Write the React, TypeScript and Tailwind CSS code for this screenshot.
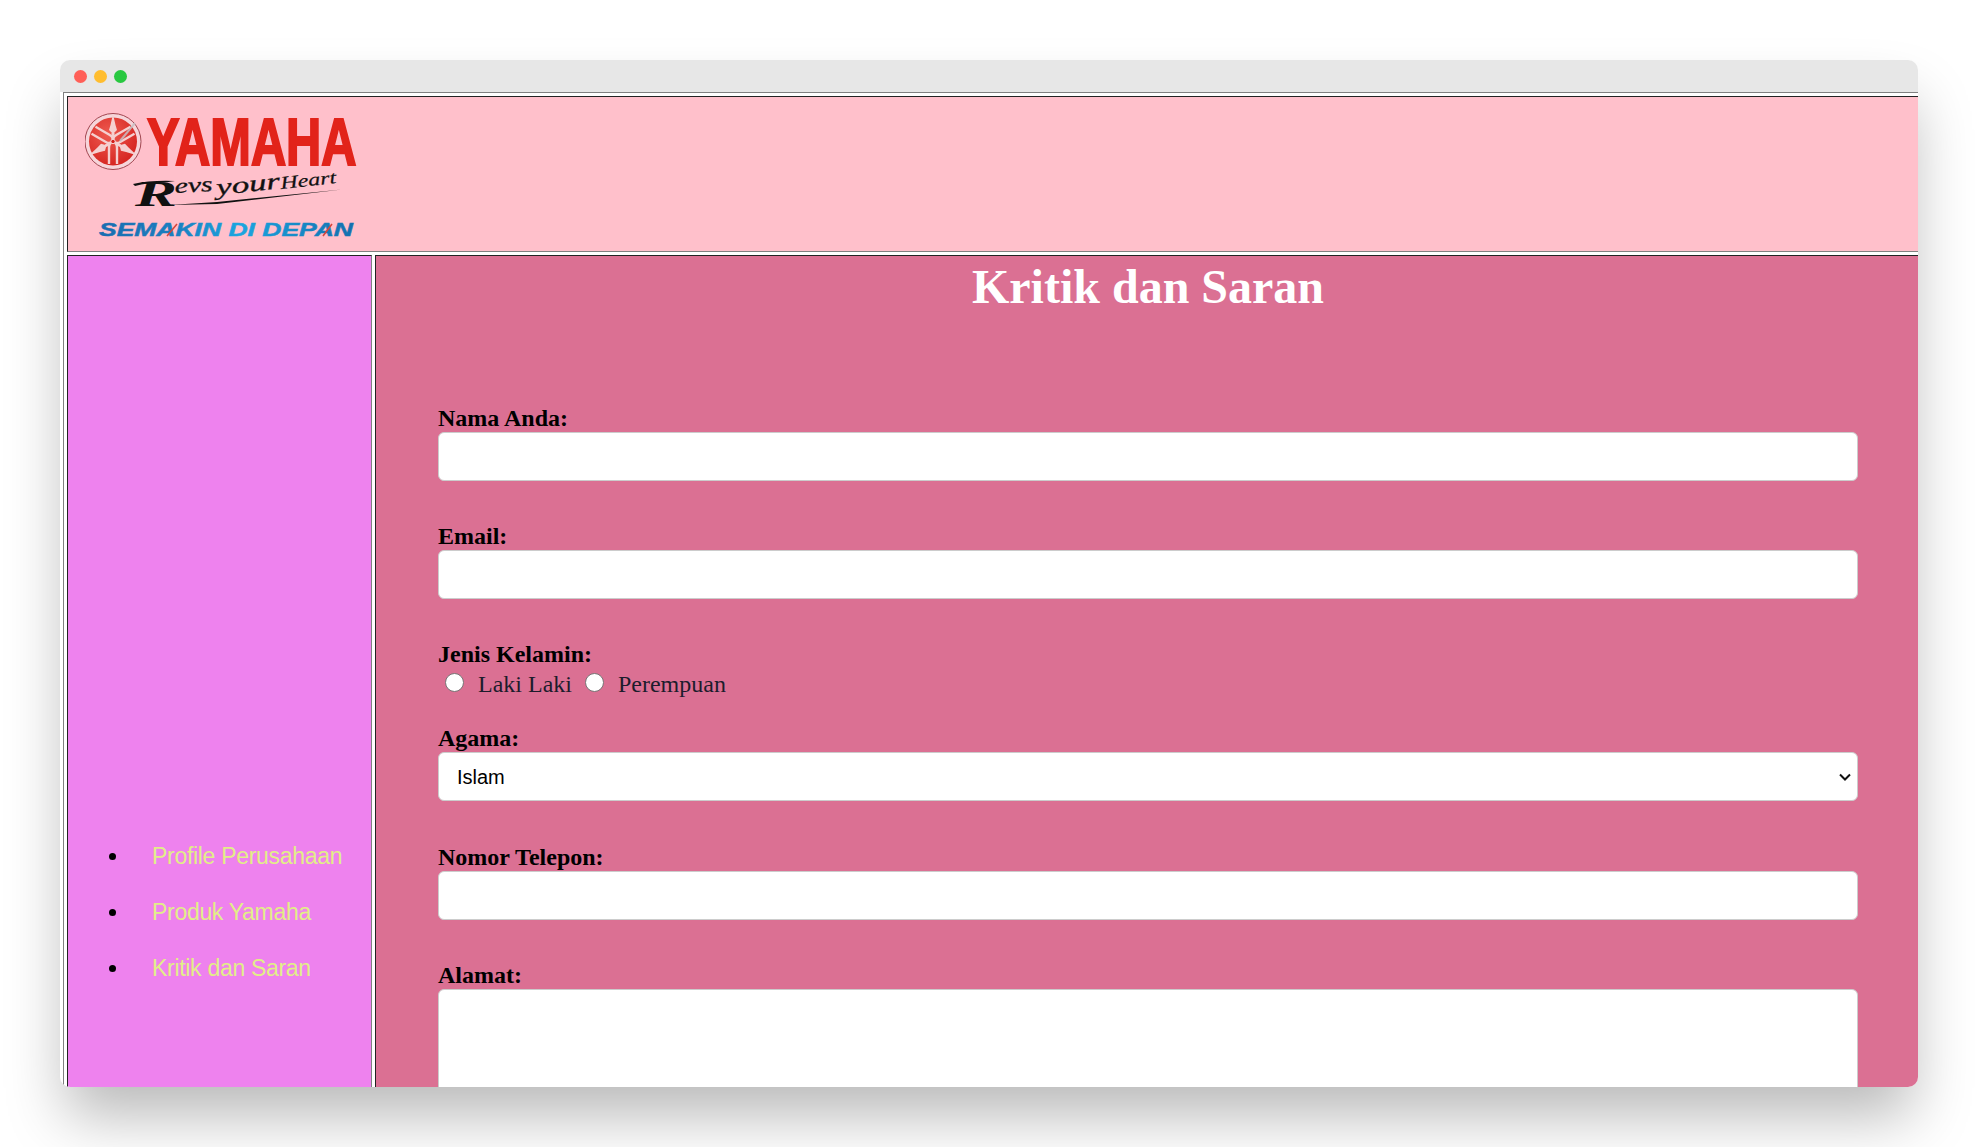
const inputClass = "block w-full h-[49px] rounded-[6px] border border-[#cccccc] bg-white";
const labelClass = "block font-bold text-[24px] leading-[27px] text-black";

function YamahaLogo() {
  const spokes = [0, 120, 240];
  return (
    <svg viewBox="0 -10 280 140" className="block w-[280px] h-[140px]">
      <defs>
        <radialGradient id="emblem" cx="40%" cy="35%" r="75%">
          <stop offset="0%" stopColor="#ee5a50" />
          <stop offset="100%" stopColor="#d3201c" />
        </radialGradient>
        <linearGradient id="semakin" x1="0" x2="1" y1="0" y2="0">
          <stop offset="0%" stopColor="#1a6db0" />
          <stop offset="30%" stopColor="#1a7fc0" />
          <stop offset="55%" stopColor="#1ba6e0" />
          <stop offset="100%" stopColor="#136fae" />
        </linearGradient>
      </defs>
      <circle cx="28" cy="30.5" r="28" fill="#f6d5da" stroke="#a14650" strokeWidth="1" />
      <circle cx="28" cy="30.5" r="24" fill="url(#emblem)" />
      {spokes.map((angle) => (
        <g key={angle} transform={`rotate(${angle} 28 30.5)`} fill="none" stroke="#f5d0d0">
          <path d="M28 3L25.5 14L24 19L28 23L32 19L30.5 14z" fill="#f5d0d0" stroke="none" />
          <path d="M28 22V30" strokeWidth="3" />
          <path d="M24 53V37Q24 31 28 31Q32 31 32 37V53" strokeWidth="2.4" />
        </g>
      ))}
      <circle cx="28" cy="30.5" r="2.2" fill="#d3201c" stroke="#f5d0d0" />
      <path d="M35 30L50 12" stroke="#c8c0c4" strokeWidth="2" opacity="0.85" />
      <text
        transform="translate(62 53.5) scale(0.9755 1.34)"
        fontFamily="'Liberation Sans', sans-serif"
        fontWeight="700"
        fontSize="50"
        fill="#e2231a"
        stroke="#e2231a"
        strokeWidth="1.6"
      >
        YAMAHA
      </text>
      <g fill="#111111">
        <text
          x="50"
          y="95"
          textLength="42"
          lengthAdjust="spacingAndGlyphs"
          fontFamily="'Liberation Serif', serif"
          fontStyle="italic"
          fontWeight="700"
          fontSize="36"
        >
          R
        </text>
        <text x="90" y="82" transform="rotate(-3 90 82)" fontFamily="'Liberation Serif', serif" fontStyle="italic" fontSize="21" stroke="#111111" strokeWidth="0.3" textLength="38" lengthAdjust="spacingAndGlyphs">
          evs
        </text>
        <text x="132" y="84" transform="rotate(-6 132 84)" fontFamily="'Liberation Serif', serif" fontStyle="italic" fontSize="23" stroke="#111111" strokeWidth="0.3" textLength="64" lengthAdjust="spacingAndGlyphs">
          your
        </text>
        <text x="196" y="78" transform="rotate(-6 196 78)" fontFamily="'Liberation Serif', serif" fontStyle="italic" fontSize="18" stroke="#111111" strokeWidth="0.2" textLength="56" lengthAdjust="spacingAndGlyphs">
          Heart
        </text>
      </g>
      <path d="M48 73Q66 69 90 70L80 71.5Q64 71 50 75zM84 94L132 91L257 78.5L132 93z" fill="#111111" />
      <text
        x="14"
        y="125"
        textLength="254"
        lengthAdjust="spacingAndGlyphs"
        fontFamily="'Liberation Sans', sans-serif"
        fontStyle="italic"
        fontWeight="700"
        fontSize="19"
        fill="url(#semakin)"
        stroke="url(#semakin)"
        strokeWidth="0.5"
      >
        SEMAKIN DI DEPAN
      </text>
      <path d="M82 125L92 113M238 125L247 113" stroke="#d8453a" strokeWidth="1.6" />
    </svg>
  );
}

function SideLink({ children }: { children: React.ReactNode }) {
  return (
    <li className="h-[56px] flex items-center">
      <span className="w-[7px] h-[7px] rounded-full bg-black ml-[41px] mr-[36px]" />
      <a href="#" className="text-[#e2ee88] text-[23px] tracking-[-0.3px]">
        {children}
      </a>
    </li>
  );
}

export default function App() {
  return (
    <div className="h-screen bg-white p-[60px] pb-0 font-['Liberation_Serif',serif]">
      <div className="w-[1858px] h-[1027px] rounded-[10px] overflow-hidden bg-white shadow-[0_35px_60px_-6px_rgba(0,0,0,0.28)]">
        <div className="h-[32px] bg-[#e7e7e7] flex items-center gap-[7px] pl-[14px] pt-[1px]">
          <span className="w-[13px] h-[13px] rounded-full bg-[#ff5f57]" />
          <span className="w-[13px] h-[13px] rounded-full bg-[#ffbd2e]" />
          <span className="w-[13px] h-[13px] rounded-full bg-[#28c840]" />
        </div>
        <div className="ml-[3px] w-[1900px] border-t border-l border-[#808080] pt-[3px] pl-[3px]">
          <header className="h-[156px] w-[1880px] border border-t-[#222222] border-l-[#222222] border-b-[#808080] border-r-[#808080] bg-[#ffc0cb] pl-[17px] pt-[4px]">
            <YamahaLogo />
          </header>
          <div className="flex gap-[3px] mt-[3px]">
            <aside className="w-[305px] h-[900px] border border-t-[#222222] border-l-[#222222] border-b-[#808080] border-r-[#808080] bg-[#ee82ee] font-['Liberation_Sans',sans-serif]">
              <ul className="pt-[572px]">
                <SideLink>Profile Perusahaan</SideLink>
                <SideLink>Produk Yamaha</SideLink>
                <SideLink>Kritik dan Saran</SideLink>
              </ul>
            </aside>
            <main className="w-[1545px] h-[900px] border border-t-[#222222] border-l-[#222222] border-b-[#808080] border-r-[#808080] bg-[#db7093] pl-[62px] pr-[61px]">
              <h1 className="text-center text-white font-bold text-[48px] leading-[55px] pt-[3px] pb-[91px]">Kritik dan Saran</h1>
              <form>
                <label className={labelClass}>Nama Anda:</label>
                <div className={inputClass} />
                <label className={`${labelClass} mt-[42px]`}>Email:</label>
                <div className={inputClass} />
                <label className={`${labelClass} mt-[42px]`}>Jenis Kelamin:</label>
                <div className="flex items-center h-[28px] text-[24px] text-[#1c1c2c]">
                  <span className="w-[19px] h-[19px] ml-[7px] mr-[14px] rounded-full border border-[#767676] bg-white" />
                  <span className="mt-[3px]">Laki Laki</span>
                  <span className="w-[19px] h-[19px] ml-[13px] mr-[14px] rounded-full border border-[#767676] bg-white" />
                  <span className="mt-[3px]">Perempuan</span>
                </div>
                <label className={`${labelClass} mt-[29px]`}>Agama:</label>
                <div className={`${inputClass} flex items-center justify-between pl-[18px] pr-[6px] font-['Liberation_Sans',sans-serif] text-[20px] text-black`}>
                  <span>Islam</span>
                  <svg viewBox="0 0 12 8" className="w-[12px] h-[8px]" fill="none" stroke="#111111" strokeWidth="2">
                    <path d="M1 1.5L6 6.5L11 1.5" />
                  </svg>
                </div>
                <label className={`${labelClass} mt-[43px]`}>Nomor Telepon:</label>
                <div className={inputClass} />
                <label className={`${labelClass} mt-[42px]`}>Alamat:</label>
                <div className="block w-full h-[200px] rounded-[6px] border border-[#cccccc] bg-white" />
              </form>
            </main>
          </div>
        </div>
      </div>
    </div>
  );
}
